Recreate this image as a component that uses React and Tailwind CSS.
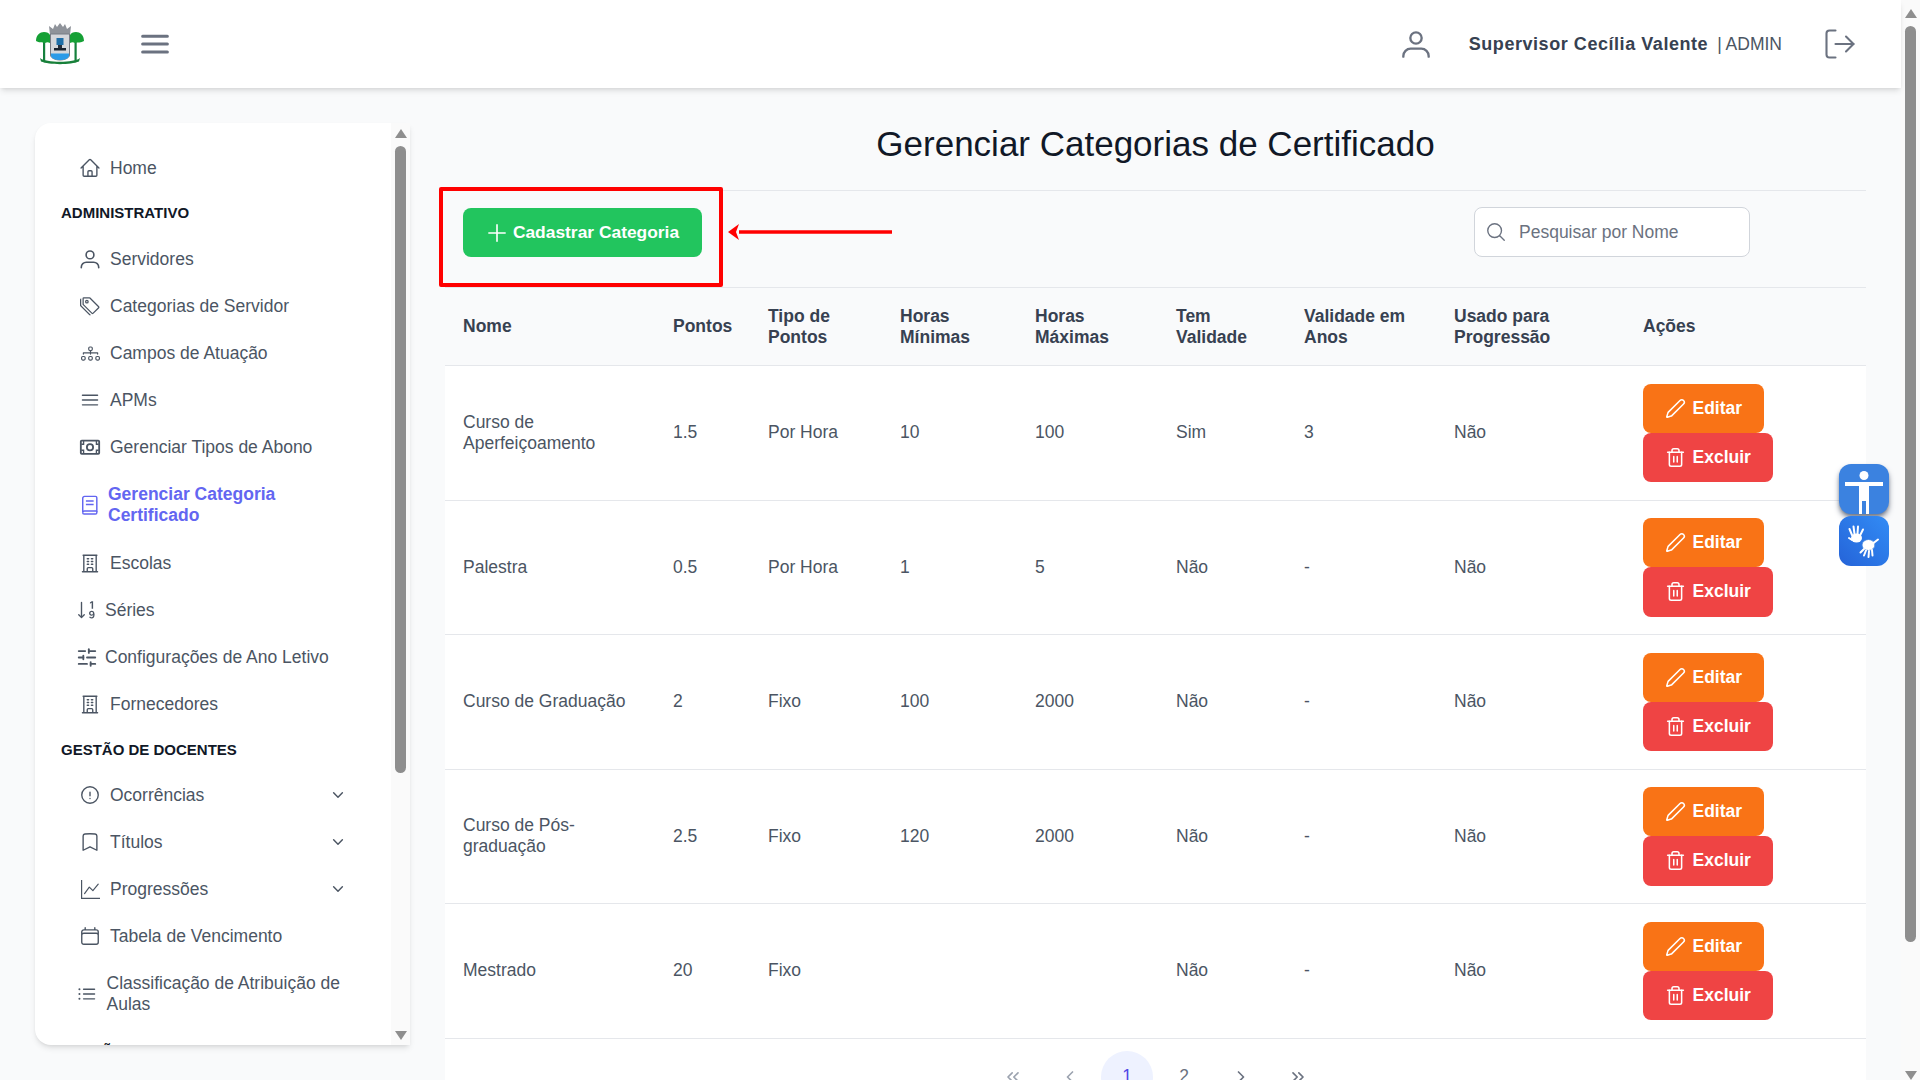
import { LogOut, Pen, Trash2, ChevronLeft, ChevronRight, ChevronsLeft, ChevronsRight, SlidersHorizontal } from "lucide-react";
import {
  HiOutlineBars3,
  HiOutlineHome,
  HiOutlineBuildingOffice,
  HiOutlineExclamationCircle,
  HiOutlineBookmark,
  HiOutlineCalendar,
  HiOutlineListBullet,
  HiOutlineChevronDown,
  HiOutlineMagnifyingGlass,
  HiOutlinePlus,
} from "react-icons/hi2";
import { BsDiagram3, BsSortNumericDown, BsGraphUp, BsTags } from "react-icons/bs";

const UserIcon = ({ size = 22, className = "" }) => (
  <svg width={size} height={size} viewBox="0 0 24 24" fill="none" stroke="currentColor" strokeWidth="1.75" className={className}>
    <circle cx="12" cy="7.5" r="4.25" />
    <path d="M2.5 21.5v-.5a5.5 5.5 0 0 1 5.5-5.5h8a5.5 5.5 0 0 1 5.5 5.5v.5" strokeLinecap="round" />
  </svg>
);

const MoneyIcon = ({ size = 22 }) => (
  <svg width={size} height={size} viewBox="0 0 24 24" fill="none" stroke="currentColor" strokeWidth="2">
    <rect x="2" y="5" width="20" height="14.5" rx="1" />
    <circle cx="12" cy="12.2" r="3.4" />
    <path d="M2.5 9h2.5V5.5M19 5.5V9h2.5M2.5 15.5H5V19M19 19v-3.5h2.5" strokeWidth="1.5" />
  </svg>
);

const BookIcon = ({ size = 22 }) => (
  <svg width={size} height={size} viewBox="0 0 22 22" fill="none" stroke="currentColor" strokeWidth="1.6">
    <path d="M5 1.5h12a1.5 1.5 0 0 1 1.5 1.5v14.5H5a2 2 0 0 0-2 2V3.5a2 2 0 0 1 2-2z" />
    <path d="M3 19.5a1.5 1.5 0 0 0 1.5 1.5h12.5a1.5 1.5 0 0 0 1.5-1.5v-2" />
    <path d="M6.5 6.5h8.5M6.5 10.5h8.5" />
  </svg>
);

const menu = [
  { label: "Home", icon: HiOutlineHome },
  { heading: "ADMINISTRATIVO", size: "h-[44px]" },
  { label: "Servidores", icon: UserIcon },
  { label: "Categorias de Servidor", icon: BsTags, iconSize: 20 },
  { label: "Campos de Atuação", icon: BsDiagram3, iconSize: 19 },
  { label: "APMs", icon: HiOutlineBars3, iconSize: 24 },
  { label: "Gerenciar Tipos de Abono", icon: MoneyIcon },
  { label: "Gerenciar Categoria Certificado", icon: BookIcon, iconSize: 20, active: true, tall: true, gap: "gap-[7px]" },
  { label: "Escolas", icon: HiOutlineBuildingOffice, iconSize: 23 },
  { label: "Séries", icon: BsSortNumericDown, iconSize: 22, shift: true },
  { label: "Configurações de Ano Letivo", icon: SlidersHorizontal, iconSize: 23, shift: true },
  { label: "Fornecedores", icon: HiOutlineBuildingOffice, iconSize: 23 },
  { heading: "GESTÃO DE DOCENTES", size: "h-[44px] pt-[2px]" },
  { label: "Ocorrências", icon: HiOutlineExclamationCircle, arrow: true },
  { label: "Títulos", icon: HiOutlineBookmark, arrow: true },
  { label: "Progressões", icon: BsGraphUp, iconSize: 19, arrow: true },
  { label: "Tabela de Vencimento", icon: HiOutlineCalendar },
  { label: "Classificação de Atribuição de Aulas", icon: HiOutlineListBullet, iconSize: 24, tall: true, shift: true, gap: "gap-[8.5px]" },
  { heading: "GESTÃO ESCOLAR", size: "mt-[12px] h-[22px]", last: true },
];

const rows = [
  ["Curso de Aperfeiçoamento", "1.5", "Por Hora", "10", "100", "Sim", "3", "Não"],
  ["Palestra", "0.5", "Por Hora", "1", "5", "Não", "-", "Não"],
  ["Curso de Graduação", "2", "Fixo", "100", "2000", "Não", "-", "Não"],
  ["Curso de Pós-graduação", "2.5", "Fixo", "120", "2000", "Não", "-", "Não"],
  ["Mestrado", "20", "Fixo", "", "", "Não", "-", "Não"],
];

const columns = [
  ["Nome", "w-[210px]"],
  ["Pontos", "w-[95px]"],
  ["Tipo de Pontos", "w-[132px]"],
  ["Horas Mínimas", "w-[135px]"],
  ["Horas Máximas", "w-[141px]"],
  ["Tem Validade", "w-[128px]"],
  ["Validade em Anos", "w-[150px]"],
  ["Usado para Progressão", "w-[189px]"],
  ["Ações", "w-[241px]"],
];

const Logo = () => (
  <svg width="48" height="42" viewBox="0 0 48 42">
    <path d="M14 12h20l1-9-4 3-2-5-2 3-3-4-3 4-2-3-2 5-4-3z" fill="#8f939a" />
    <rect x="7" y="18" width="2.2" height="20" fill="#15803d" />
    <rect x="38.5" y="18" width="2.2" height="20" fill="#15803d" />
    <path d="M0 18c0-6 4-9 8-9 3 0 5 1 6 3v8c-2-1-3-1-5 0-3-1-6 0-9-2z" fill="#15a035" />
    <path d="M48 18c0-6-4-9-8-9-3 0-5 1-6 3v8c2-1 3-1 5 0 3-1 6 0 9-2z" fill="#15a035" />
    <path d="M14.5 11h19v21c0 3-5 5-9.500 5s-9.500-2-9.500-5z" fill="#d5d7db" stroke="#777c85" />
    <rect x="20.500" y="15" width="7" height="7" fill="#1f6fa8" />
    <rect x="22" y="22" width="4" height="3" fill="#27313f" />
    <rect x="18" y="25" width="12" height="2.500" fill="#1b2430" />
    <path d="M15 30.500h18v2c0 3-4.500 4.500-9 4.500s-9-1.500-9-4.500z" fill="#2b9be8" />
    <path d="M4 35c6 5 34 5 40 0l-1 3.500c-8 3.500-30 3.500-38 0z" fill="#18803a" />
  </svg>
);

// Desenha a barra de rolagem clássica
const ScrollBar = ({ thumb, track }) => (
  <div className={`flex flex-col items-center shrink-0 w-[19px] bg-[#fafafa] ${track}`}>
    <div className="w-0 h-0 border-x-[6.5px] border-x-transparent border-b-[9px] border-b-[#8e8e8e] shrink-0" />
    <div className={`w-[11px] mt-[8px] rounded-full bg-[#8e8e8e] shrink-0 ${thumb}`} />
    <div className="flex-1" />
    <div className="w-0 h-0 border-x-[6.5px] border-x-transparent border-t-[9px] border-t-[#8e8e8e] shrink-0" />
  </div>
);

const HandsIcon = () => (
  <svg width="50" height="50" viewBox="0 0 50 50" fill="none" stroke="white" strokeLinecap="round">
    <ellipse cx="17.500" cy="22" rx="5.500" ry="4.500" fill="white" stroke="none" />
    <path d="M13 19 10.500 13M15.500 18 14.500 10.500M18.500 18 19 10.500M21 19.500 24 13.500M13 24 10 22" strokeWidth="2" />
    <ellipse cx="29.500" cy="29" rx="6.500" ry="5.500" fill="white" stroke="#3b82e0" strokeWidth="0.8" />
    <path d="M25 33 21.500 36.500M27 34.500 25 39.500M30 35 29.500 41M33 34 33.500 39.500M34.500 27 39 23.500" strokeWidth="2" />
  </svg>
);

const SidebarItem = ({ item }) => {
  if (item.heading) {
    return (
      <div className={`${item.size} flex items-center shrink-0 pl-[26px] text-[15px] font-bold text-[#111827]`}>
        {item.heading}
      </div>
    );
  }
  const Icon = item.icon;
  return (
    <div
      className={`flex items-center justify-between shrink-0 pr-[46px] ${item.tall ? "h-[69px]" : "h-[47px]"} ${
        item.shift ? "pl-[41px]" : "pl-[44px]"
      } ${item.active ? "text-[#6366f1] font-bold" : "text-[#4b5563]"}`}
    >
      <div className={`flex items-center ${item.gap || (item.shift ? "gap-[7px]" : "gap-[9px]")}`}>
        <span className="w-[22px] h-[22px] flex items-center justify-center shrink-0">
          <Icon size={item.iconSize || 22} />
        </span>
        <span className="leading-[21px]">{item.label}</span>
      </div>
      {item.arrow && <HiOutlineChevronDown size={14} strokeWidth={2.5} />}
    </div>
  );
};

const Sidebar = () => (
  <aside className="w-[375px] h-[922px] shrink-0 flex overflow-hidden bg-white rounded-l-2xl shadow-md text-[17.5px]">
    <nav className="flex-1 flex flex-col pt-[21.5px] overflow-hidden">
      {menu.map((item) => (
        <SidebarItem key={item.label || item.heading} item={item} />
      ))}
    </nav>
    <ScrollBar track="py-[6px] pb-[5px]" thumb="h-[627px]" />
  </aside>
);

const ActionButtons = () => (
  <div className="flex flex-col items-start">
    <button className="h-[49px] px-[21.5px] flex items-center gap-[7px] rounded-lg bg-[#f97316] text-white font-bold">
      <Pen size={21} strokeWidth={1.75} />
      Editar
    </button>
    <button className="h-[49.5px] pl-[21.5px] pr-[22.5px] flex items-center gap-[7px] rounded-lg bg-[#ef4444] text-white font-bold">
      <Trash2 size={21} strokeWidth={1.75} />
      Excluir
    </button>
  </div>
);

const DataTable = () => (
  <table className="w-full table-fixed border-collapse text-[17.5px] leading-[21px]">
    <thead>
      <tr className="h-[78px] border-y border-[#e5e7eb]">
        {columns.map(([title, width]) => (
          <th key={title} className={`${width} px-[18px] text-left font-bold text-[#374151]`}>
            {title}
          </th>
        ))}
      </tr>
    </thead>
    <tbody className="bg-white text-[#4b5563]">
      {rows.map((row) => (
        <tr key={row[0]} className="h-[134.5px] border-b border-[#e5e7eb]">
          {row.map((value, i) => (
            <td key={i} className="px-[18px]">
              {value}
            </td>
          ))}
          <td className="px-[18px]">
            <ActionButtons />
          </td>
        </tr>
      ))}
    </tbody>
  </table>
);

const Pagination = () => (
  <div className="bg-white flex justify-center items-center h-[76px] gap-[5px] text-[17.5px] text-[#6b7280]">
    <span className="w-[52px] flex justify-center text-[#9ca3af]"><ChevronsLeft size={20} /></span>
    <span className="w-[52px] flex justify-center text-[#9ca3af]"><ChevronLeft size={20} /></span>
    <span className="w-[52px] h-[52px] rounded-full bg-[#eef2ff] text-[#4f46e5] flex items-center justify-center">1</span>
    <span className="w-[52px] flex justify-center">2</span>
    <span className="w-[52px] flex justify-center"><ChevronRight size={20} /></span>
    <span className="w-[52px] flex justify-center"><ChevronsRight size={20} /></span>
  </div>
);

const App = () => {
  return (
    <div className="w-screen h-screen overflow-hidden flex bg-[#f9fafb] font-['Liberation_Sans',Arial,sans-serif] relative">
      <div className="flex-1 min-w-0 flex flex-col">
        <header className="h-[88px] shrink-0 bg-white shadow-md flex items-center justify-between pl-[36px] pr-[43px] relative z-10">
          <div className="flex items-center gap-[53px]">
            <Logo />
            <HiOutlineBars3 size={36} strokeWidth={2} className="text-[#6b7280]" />
          </div>
          <div className="flex items-center">
            <UserIcon size={32} className="text-[#6b7280]" />
            <span className="ml-[37px] text-[18px] tracking-[0.55px] font-bold text-[#374151]">Supervisor Cecília Valente</span>
            <span className="ml-[9px] text-[17.5px] text-[#4b5563]">| ADMIN</span>
            <LogOut size={36} strokeWidth={1.4} className="ml-[40px] text-[#6b7280]" />
          </div>
        </header>
        <div className="flex-1 min-h-0 flex pl-[35px] pt-[35px] gap-[35px]">
          <Sidebar />
          <main className="w-[1421px] shrink-0 -mt-[35px]">
            <h1 className="h-[102px] flex items-center justify-center pt-[10px] text-[35px] text-[#111827]">
              Gerenciar Categorias de Certificado
            </h1>
            <div className="relative h-[97px] border-t border-[#e5e7eb] flex items-start justify-between pt-[17px] pl-[18px] pr-[116px] text-[17.5px]">
              <button className="h-[49px] w-[239px] flex items-center justify-center gap-[3px] pr-[2px] rounded-lg bg-[#22c55e] text-white font-bold text-[17.4px]">
                <HiOutlinePlus size={26} />
                Cadastrar Categoria
              </button>
              <div className="h-[50px] w-[276px] -mt-[1px] flex items-center gap-[12px] px-[10px] rounded-lg border border-[#d1d5db] bg-white text-[#6b7280]">
                <HiOutlineMagnifyingGlass size={22} />
                Pesquisar por Nome
              </div>
              {/* Anotação vermelha sobre o print */}
              <div className="absolute left-[-6px] top-[-4px] w-[284px] h-[100px] border-4 border-[#ff0000] rounded-[2px]" />
              <svg className="absolute left-[282px] top-[28px]" width="166" height="26" viewBox="0 0 166 26">
                <path d="M165 13H12" stroke="#ff0000" strokeWidth="3.5" />
                <path d="M1 13l11-8-3 8 3 8z" fill="#ff0000" />
              </svg>
            </div>
            <DataTable />
            <Pagination />
          </main>
        </div>
      </div>
      <ScrollBar track="pt-[9px]" thumb="h-[916px]" />
      <div className="absolute left-[1839px] top-[464px] flex flex-col gap-[2px]">
        <div className="w-[50px] h-[50px] rounded-xl bg-[#3b82e0] shadow-md shadow-gray-500 flex justify-center">
          <svg width="40" height="50" viewBox="0 0 40 50" fill="white">
            <circle cx="20" cy="11.500" r="4.500" />
            <path d="M1 18h38v4H25v28h-3V37h-4v13h-3V22H1z" />
          </svg>
        </div>
        <div className="w-[50px] h-[50px] rounded-xl bg-gradient-to-tr from-[#2563d8] to-[#338cf5]">
          <HandsIcon />
        </div>
      </div>
    </div>
  );
};

export default App;
